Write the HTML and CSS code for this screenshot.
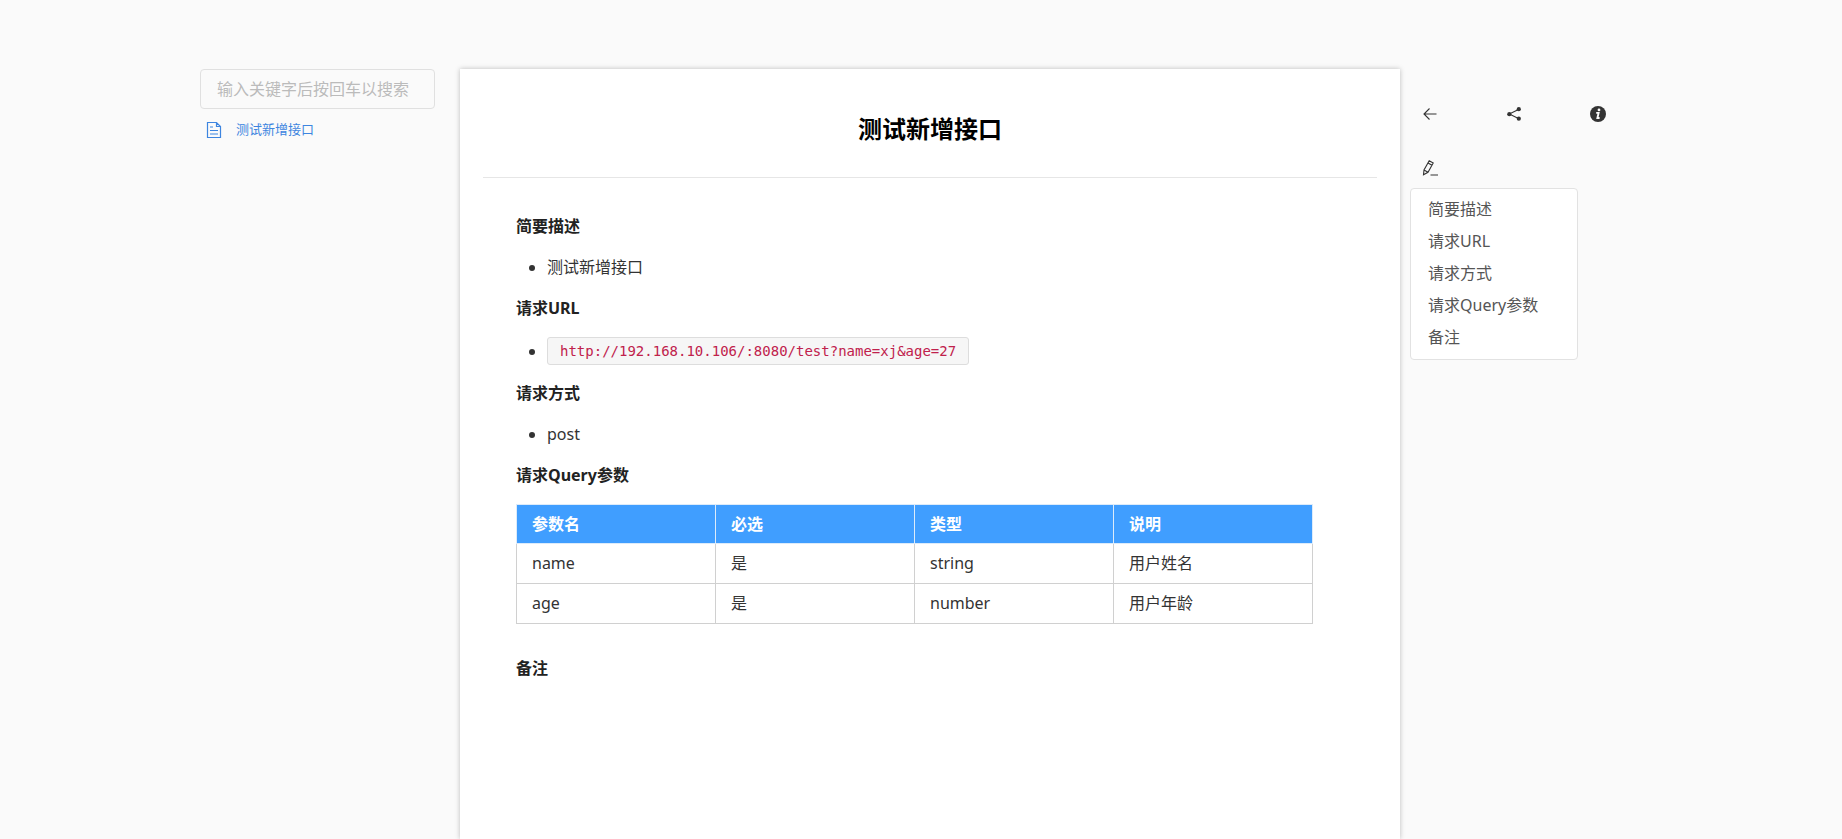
FILE: index.html
```html
<!DOCTYPE html>
<html lang="zh-CN">
<head>
<meta charset="utf-8">
<meta name="viewport" content="width=device-width, initial-scale=1">
<title>测试新增接口</title>
<link rel="stylesheet" href="styles.css">
</head>
<body>
<div class="layout">
  <aside class="sidebar">
    <input class="search" type="text" aria-label="搜索" placeholder="输入关键字后按回车以搜索">
    <nav>
      <a class="page-link" href="#doc">
        <svg class="page-icon" viewBox="0 0 16 18" aria-hidden="true"><path d="M1.500 1.500h9l4 4v11h-13zM10.500 1.500v4h4M4 6h3M4 9.500h8M4 13h8"/></svg>
        <span>测试新增接口</span>
      </a>
    </nav>
  </aside>

  <main class="paper" id="doc">
    <h1 class="title">测试新增接口</h1>
    <article class="doc">
      <h2 class="heading" id="s1">简要描述</h2>
      <ul class="list"><li>测试新增接口</li></ul>
      <h2 class="heading" id="s2">请求URL</h2>
      <ul class="list"><li class="code-item"><code class="code">http://192.168.10.106/:8080/test?name=xj&amp;age=27</code></li></ul>
      <h2 class="heading" id="s3">请求方式</h2>
      <ul class="list"><li>post</li></ul>
      <h2 class="heading" id="s4">请求Query参数</h2>
      <table class="params">
        <thead><tr><th>参数名</th><th>必选</th><th>类型</th><th>说明</th></tr></thead>
        <tbody>
          <tr><td>name</td><td>是</td><td>string</td><td>用户姓名</td></tr>
          <tr><td>age</td><td>是</td><td>number</td><td>用户年龄</td></tr>
        </tbody>
      </table>
      <h2 class="heading" id="s5">备注</h2>
    </article>
  </main>

  <aside class="tools">
    <div class="actions">
      <button class="action" type="button" aria-label="返回"><svg viewBox="0 0 16 16"><path class="line" d="M14.500 8H2M7.500 2.500 2 8l5.500 5.500"/></svg></button>
      <button class="action" type="button" aria-label="分享"><svg viewBox="0 0 16 16"><path class="line" d="M13 3.200 3.300 8 13 12.800"/><circle cx="3.300" cy="8.200" r="2.100"/><circle cx="12.800" cy="3.200" r="2.100"/><circle cx="12.800" cy="12.700" r="2.100"/></svg></button>
      <button class="action" type="button" aria-label="信息"><svg viewBox="0 0 16 16"><circle cx="8" cy="8" r="8"/><circle class="cut" cx="9" cy="3.900" r="1.400"/><path class="cut-line" d="M6.200 6.900h2.400L7.400 12h2.200"/></svg></button>
      <button class="action" type="button" aria-label="编辑"><svg viewBox="0 0 16 16"><path class="line" d="M1.500 14.800 2 10 7.200.8l4 2.200L6 12.300zM6 2.900l4 2.300M2 10l4 2.300M8.500 15H16"/></svg></button>
    </div>
    <nav class="toc" aria-label="目录">
      <a href="#s1">简要描述</a>
      <a href="#s2">请求URL</a>
      <a href="#s3">请求方式</a>
      <a href="#s4">请求Query参数</a>
      <a href="#s5">备注</a>
    </nav>
  </aside>
</div>
</body>
</html>
```

FILE: styles.css
```css
* {
  box-sizing: border-box;
}

body {
  margin: 0;
  background: #fafafa;
  color: #333;
  font: 16px/25px "Noto Sans", "Noto Sans CJK SC", sans-serif;
}

a {
  color: inherit;
  text-decoration: none;
}

.layout {
  display: grid;
  grid-template-columns: 260px minmax(0, 940px) 242px;
  justify-content: center;
  min-height: 100vh;
  padding-top: 69px;
}

.sidebar {
  padding-right: 25px;
}

.search {
  width: 100%;
  height: 40px;
  padding: 0 16px;
  border: 1px solid #e0e0e0;
  border-radius: 4px;
  background: transparent;
  font: inherit;
}

.search::placeholder {
  color: #bbb;
  opacity: 1;
}

.page-link {
  display: flex;
  align-items: center;
  gap: 14px;
  padding: 8px 6px;
  color: #3d85e0;
  font-size: 13px;
}

.page-icon {
  width: 16px;
  height: 18px;
  fill: none;
  stroke: currentColor;
  stroke-width: 1.2;
}

.paper {
  padding: 0 23px;
  background: #fff;
  box-shadow: 0 0 5px rgba(0, 0, 0, 0.25);
}

.title {
  margin: 0;
  padding: 42px 0 30px;
  border-bottom: 1px solid #e6e6e6;
  color: #000;
  font-size: 24px;
  line-height: 36px;
  text-align: center;
}

.doc {
  display: flex;
  flex-direction: column;
  gap: 16px;
  padding: 36px 64px 64px 33px;
}

.heading {
  margin: 0;
  color: #222;
  font-size: 16px;
  line-height: 25px;
}

.list {
  margin: 0;
  padding-left: 31px;
}

.code-item {
  line-height: 28px;
}

.code {
  display: inline-block;
  max-width: 100%;
  padding: 0 12px;
  border: 1px solid #ddd;
  border-radius: 3px;
  background: #f6f6f6;
  color: #c0214c;
  font: 14px/26px "DejaVu Sans Mono", monospace;
  vertical-align: top;
  overflow-wrap: anywhere;
}

.params {
  width: 100%;
  margin-bottom: 16px;
  border-collapse: collapse;
  table-layout: fixed;
}

.params th,
.params td {
  padding: 7px 15px;
  border: 1px solid #d0d0d0;
  text-align: left;
}

.params th {
  background: #409eff;
  border-color: #dcebfa;
  color: #fff;
  line-height: 24px;
}

.tools {
  padding: 25px 0 0 10px;
}

.actions {
  display: grid;
  grid-template-columns: repeat(3, 84px);
  row-gap: 14px;
}

.action {
  display: grid;
  place-items: center;
  width: 40px;
  height: 40px;
  padding: 0;
  border: 0;
  background: none;
  color: #333;
  cursor: pointer;
}

.action svg {
  width: 16px;
  height: 16px;
  fill: currentColor;
}

.action .line {
  fill: none;
  stroke: currentColor;
  stroke-width: 1.1;
}

.action .cut {
  fill: #fafafa;
}

.action .cut-line {
  fill: none;
  stroke: #fafafa;
  stroke-width: 1.9;
}

.toc {
  display: flex;
  flex-direction: column;
  width: 168px;
  padding: 4px 17px 6px;
  border: 1px solid #e2e2e2;
  border-radius: 4px;
  background: #fff;
  color: #555;
  line-height: 32px;
}
```
